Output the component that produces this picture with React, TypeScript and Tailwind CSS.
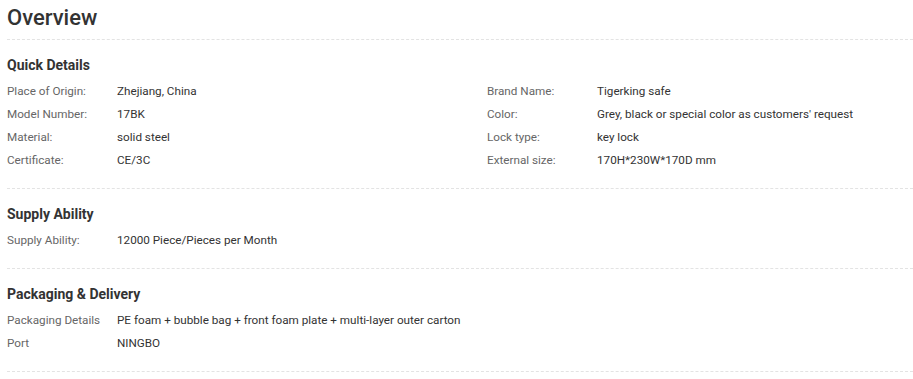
const quickDetails: [string, string][][] = [
  [
    ["Place of Origin:", "Zhejiang, China"],
    ["Model Number:", "17BK"],
    ["Material:", "solid steel"],
    ["Certificate:", "CE/3C"],
  ],
  [
    ["Brand Name:", "Tigerking safe"],
    ["Color:", "Grey, black or special color as customers' request"],
    ["Lock type:", "key lock"],
    ["External size:", "170H*230W*170D mm"],
  ],
];

const supply: [string, string][] = [["Supply Ability:", "12000 Piece/Pieces per Month"]];

const packaging: [string, string][] = [
  ["Packaging Details", "PE foam + bubble bag + front foam plate + multi-layer outer carton"],
  ["Port", "NINGBO"],
];

function Row({ label, value }: { label: string; value: string }) {
  return (
    <div className="flex h-[23px] items-center text-[11.7px] leading-[23px]">
      <div className="w-[110px] shrink-0 text-[#666]">{label}</div>
      <div className="text-[#333]">{value}</div>
    </div>
  );
}

function Section({ title, children }: { title: string; children: React.ReactNode }) {
  return (
    <section className="border-b border-dashed border-[#e3e3e3] pt-[15px] pb-[16px]">
      <h3 className="text-[14px] leading-[20px] font-bold text-[#333]">{title}</h3>
      <div className="mt-[5px]">{children}</div>
    </section>
  );
}

export default function App() {
  return (
    <div className="bg-white pl-[7px] font-['Roboto',sans-serif]">
      <h2 className="border-b border-dashed border-[#e3e3e3] pt-[5px] pb-[9px] text-[22px] leading-[25px] font-medium text-[#333]">
        Overview
      </h2>
      <Section title="Quick Details">
        <div className="grid grid-cols-[480px_1fr]">
          {quickDetails.map((col, i) => (
            <div key={i}>
              {col.map(([label, value]) => (
                <Row key={label} label={label} value={value} />
              ))}
            </div>
          ))}
        </div>
      </Section>
      <Section title="Supply Ability">
        {supply.map(([label, value]) => (
          <Row key={label} label={label} value={value} />
        ))}
      </Section>
      <Section title="Packaging & Delivery">
        {packaging.map(([label, value]) => (
          <Row key={label} label={label} value={value} />
        ))}
      </Section>
    </div>
  );
}
